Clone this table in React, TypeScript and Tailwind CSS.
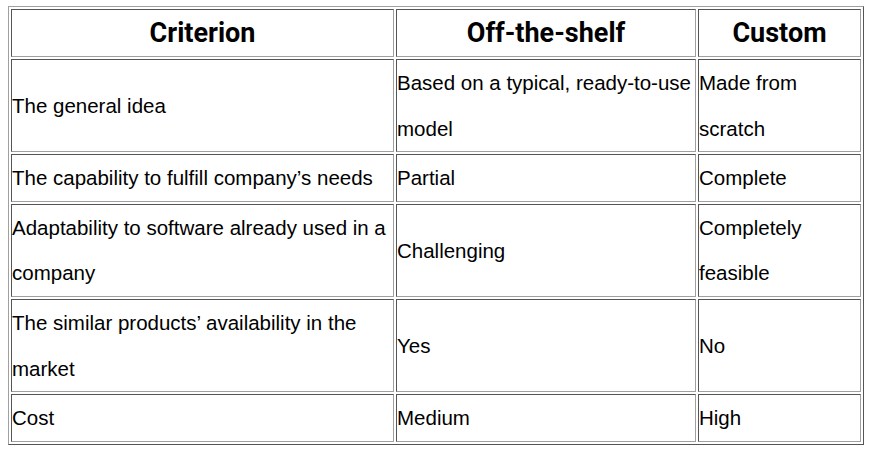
import React from 'react';

const rows: [string, string, string][] = [
  ['The general idea', 'Based on a typical, ready-to-use model', 'Made from scratch'],
  ['The capability to fulfill company’s needs', 'Partial', 'Complete'],
  ['Adaptability to software already used in a company', 'Challenging', 'Completely feasible'],
  ['The similar products’ availability in the market', 'Yes', 'No'],
  ['Cost', 'Medium', 'High'],
];

const cell =
  'border border-t-[#555] border-l-[#555] border-r-[#a0a0a0] border-b-[#a0a0a0] p-0 align-middle';

export default function App() {
  return (
    <div className="bg-white w-[872px] h-[451px] px-2 pt-[6px]">
      <table className="w-full table-fixed border-separate border-spacing-[2px] border border-t-[#a0a0a0] border-l-[#a0a0a0] border-r-[#555] border-b-[#555] text-black">
        <colgroup>
          <col className="w-[383px]" />
          <col className="w-[300px]" />
          <col />
        </colgroup>
        <thead>
          <tr>
            {['Criterion', 'Off-the-shelf', 'Custom'].map((h) => (
              <th
                key={h}
                className={`${cell} text-center font-bold text-[27px] leading-[46px] font-['Roboto',sans-serif]`}
              >
                {h}
              </th>
            ))}
          </tr>
        </thead>
        <tbody>
          {rows.map((r) => (
            <tr key={r[0]}>
              {r.map((t, i) => (
                <td
                  key={i}
                  className={`${cell} text-left text-[20.5px] leading-[45.6px] font-['Liberation_Sans',Arial,sans-serif]`}
                >
                  {t}
                </td>
              ))}
            </tr>
          ))}
        </tbody>
      </table>
    </div>
  );
}
